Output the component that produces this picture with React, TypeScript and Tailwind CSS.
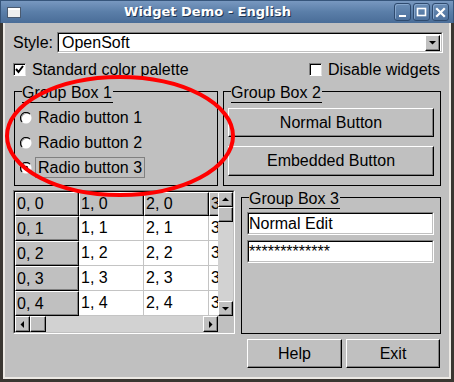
import React from "react";

const FONT = "font-['Liberation_Sans',Arial,sans-serif]";
const RAISED =
  "bg-[#c0c0c0] border border-t-white border-l-white border-b-black border-r-black shadow-[inset_-1px_-1px_0_#808080]";

function Tri({ dir }: { dir: "up" | "down" | "left" | "right" }) {
  const pts = {
    up: "0,5 7,5 3.5,1.5",
    down: "0,2 7,2 3.5,5.5",
    left: "5,0 5,7 1.5,3.5",
    right: "2,0 2,7 5.5,3.5",
  }[dir];
  return (
    <svg width="7" height="7" viewBox="0 0 7 7">
      <polygon points={pts} fill="#000" />
    </svg>
  );
}

function ArrowBtn({ dir, className = "" }: { dir: "up" | "down" | "left" | "right"; className?: string }) {
  return (
    <div className={`flex items-center justify-center shrink-0 ${RAISED} ${className}`}>
      <Tri dir={dir} />
    </div>
  );
}

function Sunken({ className = "", inner = "", children }: { className?: string; inner?: string; children?: React.ReactNode }) {
  return (
    <div className={`border border-t-[#808080] border-l-[#808080] border-b-white border-r-white ${className}`}>
      <div className={`w-full h-full border border-t-black border-l-black border-b-[#c0c0c0] border-r-[#c0c0c0] ${inner}`}>
        {children}
      </div>
    </div>
  );
}

function CheckBox({ checked }: { checked?: boolean }) {
  return (
    <div className="w-[13px] h-[13px] shrink-0 bg-white border border-t-[#808080] border-l-[#808080] border-b-white border-r-[#dcdcdc] shadow-[inset_1px_1px_0_#000] flex items-center justify-center">
      {checked && (
        <svg width="11" height="11" viewBox="0 0 11 11">
          <polyline points="2,5 4.5,8 9,2" fill="none" stroke="#000" strokeWidth="2" />
        </svg>
      )}
    </div>
  );
}

function Radio({ checked }: { checked?: boolean }) {
  return (
    <svg width="12" height="12" viewBox="0 0 12 12" className="shrink-0">
      <circle cx="6" cy="6" r="5.5" fill="#fff" />
      <path d="M 2.1 9.9 A 5.5 5.5 0 0 1 9.9 2.1" stroke="#000" strokeWidth="1.2" fill="none" />
      <path d="M 1.5 8 A 5.5 5.5 0 0 1 8 1.5" stroke="#808080" strokeWidth="0.8" fill="none" />
      {checked && <circle cx="6" cy="6" r="2.2" fill="#000" />}
    </svg>
  );
}

function GroupBox({
  title,
  className = "",
  children,
}: {
  title: string;
  className?: string;
  children?: React.ReactNode;
}) {
  return (
    <div className={`relative border border-black shrink-0 ${className}`}>
      <span className="absolute left-[7px] top-[-8px] bg-[#c0c0c0] border-b border-black leading-[18px] pr-[1px] whitespace-nowrap">
        {title}
      </span>
      {children}
    </div>
  );
}

function PushButton({ label, className = "" }: { label: string; className?: string }) {
  return (
    <div className={`flex items-center justify-center shrink-0 ${RAISED} ${className}`}>
      <span className="leading-[18px]">{label}</span>
    </div>
  );
}

function TitleBtn({ kind }: { kind: "min" | "max" | "close" }) {
  return (
    <div className="w-[17px] h-[18px] rounded-[3px] border border-[#2e4a6e] bg-gradient-to-b from-[#6a8db6] to-[#4d719d] shadow-[inset_1px_1px_0_#86a6cc] flex items-center justify-center">
      <svg width="11" height="11" viewBox="0 0 11 11">
        {kind === "min" && <rect x="2" y="8" width="7" height="2" fill="#fff" />}
        {kind === "max" && <rect x="1.5" y="1.5" width="8" height="7" fill="none" stroke="#fff" strokeWidth="1.6" />}
        {kind === "close" && (
          <path d="M2 2 L9 9 M9 2 L2 9" stroke="#fff" strokeWidth="2.2" strokeLinecap="square" />
        )}
      </svg>
    </div>
  );
}

const COLS = [64, 65, 65, 65];
const ROWS = [24, 25, 25, 25, 25];

function Table() {
  return (
    <Sunken className="w-[222px] h-[144px] shrink-0" inner="flex flex-col">
      <div className="flex">
        <div className="w-[203px] h-[124px] overflow-hidden bg-white flex flex-col">
          {ROWS.map((h, r) => (
            <div key={r} className="flex shrink-0" style={{ height: h }}>
              {COLS.map((w, c) => {
                const header = r === 0 || c === 0;
                return (
                  <div
                    key={c}
                    style={{ width: w }}
                    className={`shrink-0 h-full flex items-center whitespace-nowrap leading-[18px] ${
                      header
                        ? `${RAISED} pl-[1px]`
                        : "bg-white border-r border-b border-[#c4c4c4] pl-[2px]"
                    }`}
                  >
                    {c}, {r}
                  </div>
                );
              })}
            </div>
          ))}
        </div>
        <div className="w-[15px] h-[124px] bg-[#d2d2d2] flex flex-col">
          <ArrowBtn dir="up" className="w-[15px] h-[15px]" />
          <div className={`w-[15px] h-[15px] ${RAISED}`} />
          <div className="flex-1" />
          <ArrowBtn dir="down" className="w-[15px] h-[15px]" />
        </div>
      </div>
      <div className="flex h-[16px]">
        <div className="w-[203px] h-[16px] bg-[#d2d2d2] flex">
          <ArrowBtn dir="left" className="w-[15px] h-[16px]" />
          <div className={`w-[16px] h-[16px] ${RAISED}`} />
          <div className="flex-1" />
          <ArrowBtn dir="right" className="w-[15px] h-[16px]" />
        </div>
        <div className="w-[15px] h-[16px] bg-[#c0c0c0]" />
      </div>
    </Sunken>
  );
}

export default function App() {
  return (
    <div className={`relative w-[454px] h-[382px] bg-[#3a3631] text-black text-[16px] ${FONT} overflow-hidden`}>
      {/* Title bar */}
      <div className="h-[23px] flex items-center bg-gradient-to-b from-[#7898c0] via-[#5a7ea8] to-[#4a6d98] border-t border-l border-r border-[#36557b]">
        <div className="ml-[6px] w-[14px] h-[11px] bg-[#eeeeee] border border-[#4a5a70] shadow-[inset_0_2px_0_#ffffff]" />
        <div className="flex-1 flex justify-center">
          <span className="font-['DejaVu_Sans',sans-serif] font-bold text-[13px] leading-[16px] text-white [text-shadow:1px_1px_0_#1f3552]">
            Widget Demo - English
          </span>
        </div>
        <div className="flex gap-[2px] mr-[4px]">
          <TitleBtn kind="min" />
          <TitleBtn kind="max" />
          <TitleBtn kind="close" />
        </div>
      </div>
      {/* Body frame */}
      <div className="px-[3px] pb-[3px] h-[359px]">
        <div className="h-full border-l-2 border-r-2 border-b-2 border-[#ece9e4] bg-[#c0c0c0] flex flex-col">
          {/* Style row */}
          <div className="mt-[9px] h-[21px] flex items-center pl-[8px] pr-[6px]">
            <span className="w-[44px] leading-[18px]">Style:</span>
            <Sunken className="flex-1 h-[21px]" inner="bg-white flex items-center">
              <span className="pl-[3px] flex-1 leading-[18px]">OpenSoft</span>
              <ArrowBtn dir="down" className="w-[15px] h-[16px] mr-[1px]" />
            </Sunken>
          </div>
          {/* Check row */}
          <div className="mt-[10px] h-[13px] flex items-center justify-between pl-[8px] pr-[9px]">
            <div className="flex items-center gap-[6px]">
              <CheckBox checked />
              <span className="leading-[18px]">Standard color palette</span>
            </div>
            <div className="flex items-center gap-[6px]">
              <CheckBox />
              <span className="leading-[18px]">Disable widgets</span>
            </div>
          </div>
          {/* Group boxes row */}
          <div className="mt-[15px] flex gap-[5px] pl-[9px]">
            <GroupBox title="Group Box 1" className="w-[204px] h-[95px]">
              <div className="pt-[13px] flex flex-col pl-[5px]">
                {[1, 2, 3].map((n) => (
                  <div key={n} className="h-[25px] flex items-center gap-[3px]">
                    <Radio checked={n === 3} />
                    <span
                      className={`h-[21px] flex items-center px-[2px] border leading-[18px] ${
                        n === 3 ? "border-[#808080]" : "border-transparent"
                      }`}
                    >
                      Radio button {n}
                    </span>
                  </div>
                ))}
              </div>
            </GroupBox>
            <GroupBox title="Group Box 2" className="w-[218px] h-[95px]">
              <div className="pt-[16px] pl-[4px] pr-[6px] flex flex-col gap-[9px]">
                <PushButton label="Normal Button" className="h-[29px]" />
                <PushButton label="Embedded Button" className="h-[30px]" />
              </div>
            </GroupBox>
          </div>
          {/* Bottom section */}
          <div className="mt-[4px] flex gap-[6px] pl-[8px]">
            <Table />
            <div className="flex flex-col">
              <GroupBox title="Group Box 3" className="mt-[7px] w-[200px] h-[137px]">
                <div className="pt-[14px] pl-[5px] pr-[6px] flex flex-col gap-[5px]">
                  <Sunken className="h-[23px]" inner="bg-white flex items-center">
                    <span className="leading-[18px] whitespace-nowrap">Normal Edit</span>
                  </Sunken>
                  <Sunken className="h-[23px]" inner="bg-white flex items-center">
                    <span className="leading-[18px] whitespace-nowrap">*************</span>
                  </Sunken>
                </div>
              </GroupBox>
              <div className="mt-[5px] flex gap-[4px] pl-[6px]">
                <PushButton label="Help" className="w-[95px] h-[29px]" />
                <PushButton label="Exit" className="w-[94px] h-[29px]" />
              </div>
            </div>
          </div>
        </div>
      </div>
      {/* Red annotation ellipse */}
      <svg className="absolute left-0 top-0 pointer-events-none" width="454" height="382" viewBox="0 0 454 382">
        <ellipse cx="120" cy="136" rx="113" ry="59" fill="none" stroke="#ff0000" strokeWidth="4" />
      </svg>
    </div>
  );
}
